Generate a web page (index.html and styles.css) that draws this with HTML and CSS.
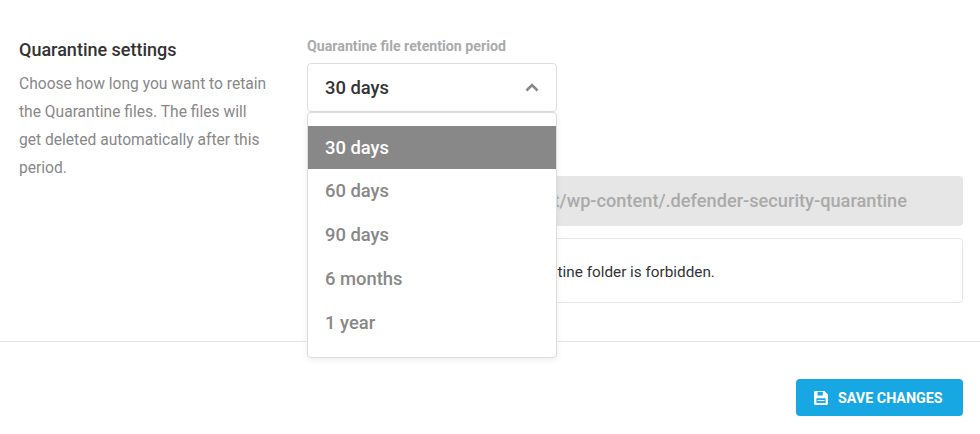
FILE: index.html
```html
<!DOCTYPE html>
<html lang="en">
<head>
  <meta charset="UTF-8">
  <title>Quarantine settings</title>
  <link rel="stylesheet" href="styles.css">
</head>
<body>

  <div class="settings-row">
    <div class="settings-info">
      <h3>Quarantine settings</h3>
      <p>Choose how long you want to retain the Quarantine files. The files will get deleted automatically after this period.</p>
    </div>

    <div class="settings-fields">
      <label class="field-label">Quarantine file retention period</label>

      <div class="select">
        <div class="select-current">
          <span>30 days</span>
          <svg class="select-arrow" width="14" height="9" viewBox="0 0 14 9" aria-hidden="true">
            <path d="M1.5 7.5 7 2l5.500 5.500" fill="none" stroke="#888" stroke-width="2.6"/>
          </svg>
        </div>
        <ul class="select-list">
          <li class="selected">30 days</li>
          <li>60 days</li>
          <li>90 days</li>
          <li>6 months</li>
          <li>1 year</li>
        </ul>
      </div>

      <div class="path-input">/var/www/html/site.net/wp-content/.defender-security-quarantine</div>

      <div class="notice">Direct access to the quarantine folder is forbidden.</div>
    </div>
  </div>

  <div class="footer">
    <button class="save-btn">
      <svg width="14" height="14" viewBox="0 0 14 14" aria-hidden="true">
        <path fill-rule="evenodd" fill="#fff" d="M1.200 0H10.500L14 3.500V12.800C14 13.500 13.500 14 12.800 14H1.200C.5 14 0 13.500 0 12.800V1.200C0 .5.500 0 1.200 0ZM3.500 .8V4.400H8.800V.8ZM2.400 7.200V12H11.600V7.200Z"/>
        <path fill="#fff" d="M3.400 9.100H10.600V10.100H3.400Z"/>
      </svg>
      SAVE CHANGES
    </button>
  </div>

</body>
</html>
```

FILE: styles.css
```css
* {
  box-sizing: border-box;
}

body {
  margin: 0;
  background: #fff;
  font-family: Roboto, sans-serif;
  color: #333;
}

.settings-row {
  display: flex;
  height: 342px;
  padding: 38px 17px 0 19px;
  border-bottom: 1px solid #e6e6e6;
}

.settings-info {
  width: 288px;
  flex-shrink: 0;
}

.settings-info h3 {
  margin: 0 0 8px;
  font-size: 18px;
  line-height: 24px;
  font-weight: 500;
  color: #333;
}

.settings-info p {
  margin: 0;
  width: 250px;
  font-size: 15.6px;
  line-height: 28px;
  color: #888;
}

.settings-fields {
  flex: 1;
}

.field-label {
  display: block;
  font-size: 14.2px;
  line-height: 16px;
  font-weight: 700;
  color: #aaa;
  margin-bottom: 9px;
}

.select {
  position: relative;
  width: 250px;
  margin-bottom: 64px;
}

.select-current {
  display: flex;
  justify-content: space-between;
  align-items: center;
  height: 49px;
  padding: 0 17px;
  border: 1px solid #ddd;
  border-radius: 4px;
  font-size: 18.4px;
  font-weight: 500;
  color: #333;
}

.select-list {
  position: absolute;
  top: 49px;
  left: 0;
  width: 250px;
  height: 246px;
  margin: 0;
  padding: 13px 0 0;
  list-style: none;
  background: #fff;
  border: 1px solid #ddd;
  border-radius: 4px;
  box-shadow: 0 2px 6px rgba(0, 0, 0, 0.07);
  font-size: 18.4px;
  font-weight: 500;
  color: #888;
}

.select-list li {
  height: 44px;
  line-height: 44px;
  padding-left: 17px;
}

.select-list li.selected {
  height: 43px;
  background: #888;
  color: #fff;
}

.path-input {
  height: 50px;
  padding: 0 56px 0 17px;
  background: #e6e6e6;
  border-radius: 4px;
  font-size: 18.2px;
  font-weight: 500;
  line-height: 50px;
  color: #aaa;
  white-space: nowrap;
  overflow: hidden;
  text-align: right;
}

.notice {
  height: 65px;
  margin-top: 12px;
  padding-left: 64px;
  border: 1px solid #e6e6e6;
  border-radius: 4px;
  font-size: 15.3px;
  line-height: 66px;
  color: #333;
}

.footer {
  display: flex;
  justify-content: flex-end;
  padding: 37px 17px 0 0;
}

.save-btn {
  display: flex;
  align-items: center;
  gap: 10px;
  height: 37px;
  width: 167px;
  padding: 0 0 0 18px;
  border: 0;
  border-radius: 4px;
  background: #17a8e3;
  font-family: Roboto, sans-serif;
  font-size: 14.3px;
  font-weight: 700;
  color: #fff;
}
```
